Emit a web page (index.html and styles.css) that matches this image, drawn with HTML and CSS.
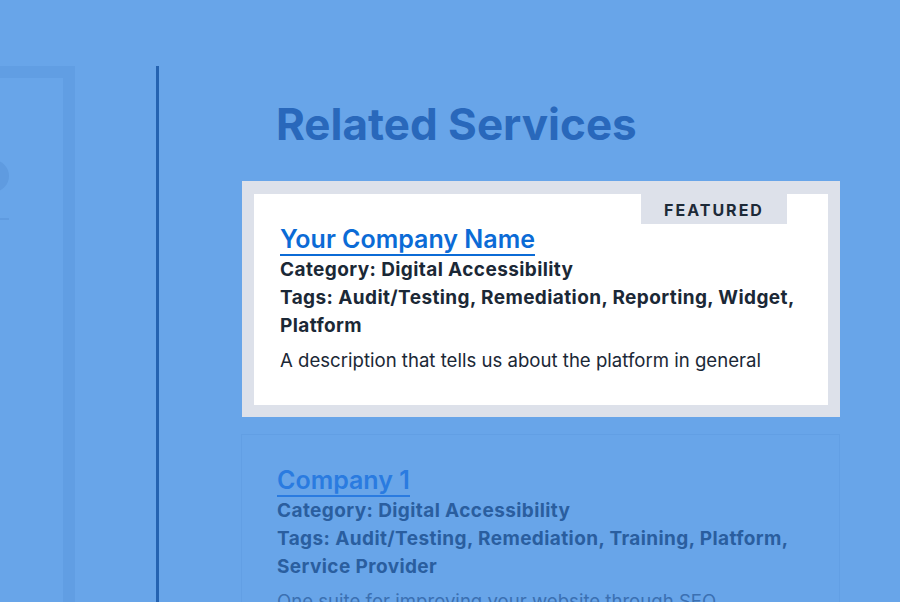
FILE: index.html
```html
<!DOCTYPE html>
<html lang="en">
<head>
<meta charset="utf-8">
<title>Related Services</title>
<link rel="stylesheet" href="styles.css">
</head>
<body>
<div class="layout">
  <aside class="sidebar">
    <div class="avatar"></div>
    <div class="rule"></div>
  </aside>
  <div class="divider"></div>
  <main class="main">
    <h2 class="heading">Related Services</h2>
    <article class="featured">
      <span class="badge">FEATURED</span>
      <a class="title" href="#">Your Company Name</a>
      <p class="meta">Category: Digital Accessibility</p>
      <p class="meta">Tags: Audit/Testing, Remediation, Reporting, Widget, Platform</p>
      <p class="desc">A description that tells us about the platform in general</p>
    </article>
    <article class="card">
      <a class="title" href="#">Company 1</a>
      <p class="meta">Category: Digital Accessibility</p>
      <p class="meta">Tags: Audit/Testing, Remediation, Training, Platform, Service Provider</p>
      <p class="desc">One suite for improving your website through SEO, accessibility and quality assurance</p>
    </article>
  </main>
</div>
</body>
</html>
```
FILE: styles.css
```css
html, body {
  margin: 0;
  height: 100%;
}
body {
  background: #68a5e9;
  font-family: Inter, "Noto Sans", sans-serif;
  overflow: hidden;
}
.layout {
  display: flex;
  align-items: stretch;
  padding-top: 66px;
  height: 536px;
  overflow: hidden;
}
.sidebar {
  flex: none;
  width: 176px;
  margin-left: -125px;
  border: 12px solid #619ee3;
  border-bottom: none;
  position: relative;
}
.avatar {
  position: absolute;
  left: 90px;
  top: 82px;
  width: 32px;
  height: 32px;
  border-radius: 50%;
  background: #5f9be0;
}
.rule {
  position: absolute;
  left: 100px;
  top: 140px;
  width: 22px;
  height: 2px;
  background: #5f9be0;
}
.divider {
  flex: none;
  width: 3px;
  margin-left: 81px;
  background: #2563b1;
}
.main {
  flex: none;
  width: 598px;
  margin-left: 83px;
}
.heading {
  margin: 30px 0 0 34px;
  font-size: 44px;
  line-height: 56px;
  font-weight: 700;
  color: #2968bb;
}
.featured {
  position: relative;
  margin-top: 29px;
  border: 12px solid #dde1ea;
  border-top-width: 13px;
  background: #fff;
  padding: 30px 26px 31px 26px;
  color: #1b2836;
}
.badge {
  position: absolute;
  top: 0;
  right: 41px;
  width: 146px;
  height: 30px;
  background: #dde1ea;
  color: #1d2a38;
  font-size: 16px;
  font-weight: 700;
  letter-spacing: 2px;
  line-height: 32px;
  text-align: center;
}
.title {
  display: inline-block;
  font-size: 25px;
  line-height: 30px;
  font-weight: 600;
  color: #0b6bd6;
  text-decoration: none;
  border-bottom: 2px solid #0b6bd6;
}
.meta {
  margin: 0;
  font-size: 19px;
  line-height: 28px;
  font-weight: 700;
  letter-spacing: 0.4px;
}
.desc {
  margin: 6px 0 0;
  font-size: 18.6px;
  line-height: 28px;
  font-weight: 400;
}
.card {
  margin-top: 17px;
  margin-left: -1px;
  border: 1px solid #629fe4;
  padding: 30px 35px;
  color: #2a5e9f;
}
.card .title {
  color: #2a7be0;
  border-bottom-color: #2a7be0;
}
.card .desc {
  color: #3b70b2;
}
```
